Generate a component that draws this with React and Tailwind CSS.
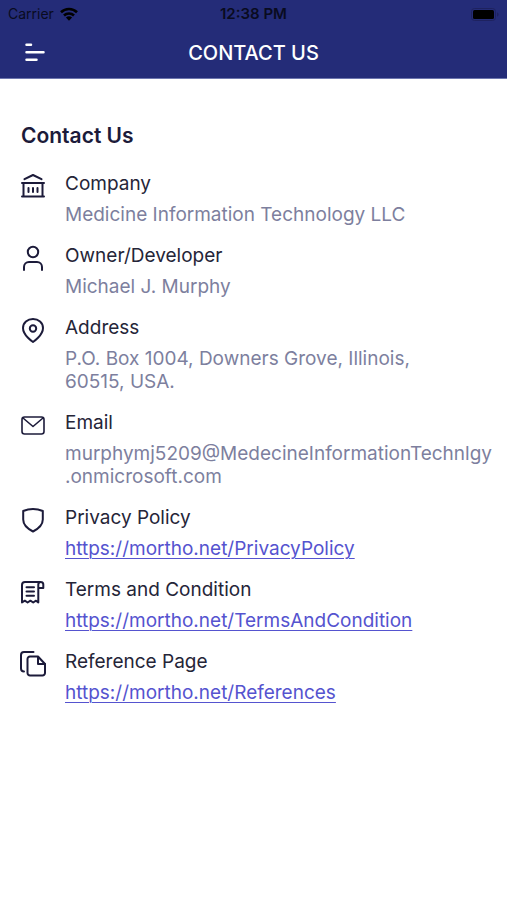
const iconProps = {
  viewBox: "0 0 24 24",
  fill: "none",
  stroke: "currentColor",
  strokeWidth: 2,
  strokeLinecap: "round",
  strokeLinejoin: "round",
  "aria-hidden": true,
  className: "w-6 h-6 shrink-0 mt-0.5 overflow-visible text-[#1c1b3a]",
};

function BankIcon() {
  return (
    <svg {...iconProps}>
      <path d="M3.500 5.200L12 1l8.500 4.200" />
      <path d="M1 9h22M2.500 9v13.500M21.500 9v13.500M1 22.500h22" />
      <path d="M7.500 14v4M12 14v4M16.500 14v4" />
    </svg>
  );
}

function UserIcon() {
  return (
    <svg {...iconProps}>
      <circle cx="12" cy="6" r="5.200" />
      <path d="M3 24v-3c0-2.800 2.200-5 5-5h8c2.800 0 5 2.200 5 5v3" />
    </svg>
  );
}

function PinIcon() {
  return (
    <svg {...iconProps}>
      <path d="M12 24S2 17.500 2 10C2 4.600 6.500 1 12 1s10 3.600 10 9c0 7.500-10 14-10 14z" />
      <circle cx="12" cy="10.500" r="3.200" />
    </svg>
  );
}

function MailIcon() {
  return (
    <svg {...iconProps} strokeWidth={1.6}>
      <rect x="1" y="4" width="22" height="17" rx="2.500" />
      <path d="M2 5l10 8.500L22 5" />
    </svg>
  );
}

function ShieldIcon() {
  return (
    <svg {...iconProps}>
      <path d="M12 1c3.500 0 6.800.7 9.800 2v8.500c0 6-4.300 9.200-9.800 12C6.500 20.700 2.200 17.500 2.200 11.500V3c3-1.300 6.300-2 9.800-2z" />
    </svg>
  );
}

function ReceiptIcon() {
  return (
    <svg {...iconProps}>
      <path d="M20 2H4a3 3 0 0 0-3 3v17.500l2.800-1.800 2.800 1.800 2.800-1.800 2.800 1.800 2.800-1.800 2.300 1.800V4.500a2.500 2.500 0 0 1 5 0V8h-4.500" />
      <path d="M5.500 7.200h7.500M5.500 11.500h7.500M5.500 15.800h7.500" />
    </svg>
  );
}

function PagesIcon() {
  return (
    <svg {...iconProps}>
      <path d="M12.500 0H3a3 3 0 0 0-3 3v13.500a3 3 0 0 0 3 3" />
      <path d="M17 4.500H9A2.500 2.500 0 0 0 6.500 7v14A2.500 2.500 0 0 0 9 23.500h12.500A2.500 2.500 0 0 0 24 21v-9l-7-7.500z" />
      <path d="M17 5v7h7" />
    </svg>
  );
}

const contacts = [
  { title: "Company", icon: BankIcon, lines: ["Medicine Information Technology LLC"] },
  { title: "Owner/Developer", icon: UserIcon, lines: ["Michael J. Murphy"] },
  {
    title: "Address",
    icon: PinIcon,
    lines: ["P.O. Box 1004, Downers Grove, Illinois,", "60515, USA."],
  },
  {
    title: "Email",
    icon: MailIcon,
    lines: ["murphymj5209@MedecineInformationTechnlgy", ".onmicrosoft.com"],
  },
  { title: "Privacy Policy", icon: ShieldIcon, url: "https://mortho.net/PrivacyPolicy" },
  { title: "Terms and Condition", icon: ReceiptIcon, url: "https://mortho.net/TermsAndCondition" },
  { title: "Reference Page", icon: PagesIcon, url: "https://mortho.net/References" },
];

function StatusBar() {
  return (
    <div className="grid grid-cols-3 items-center h-7 px-2 text-sm text-[#090b20]">
      <div className="flex items-center gap-1.5">
        <span>Carrier</span>
        <svg viewBox="0 0 18 14" className="w-[18px] h-3.5" aria-hidden="true">
          <g fill="none" stroke="#000" strokeWidth="2.600">
            <path d="M1 5.200a11.500 11.500 0 0 1 16 0" />
            <path d="M4 8.500a7.200 7.200 0 0 1 10 0" />
          </g>
          <path d="M9 13.800L5.900 10.600a4.500 4.500 0 0 1 6.200 0z" fill="#000" />
        </svg>
      </div>
      <span className="text-center text-[15px] font-semibold">12:38 PM</span>
      <svg viewBox="0 0 28 13" className="w-7 h-[13px] justify-self-end" aria-hidden="true">
        <rect x="0.500" y="0.500" width="24" height="12" rx="3" fill="none" stroke="#1e225f" />
        <rect x="2" y="2" width="21" height="9" rx="1.500" fill="#000" />
        <path d="M26 4.500v4c1-.3 1.600-1 1.600-2s-.6-1.700-1.600-2z" fill="#1e225f" />
      </svg>
    </div>
  );
}

function Header() {
  return (
    <header className="bg-[#242c78] border-b border-[#6d76ae]">
      <StatusBar />
      <div className="grid grid-cols-[40px_1fr_40px] items-center h-[50px] px-[15px]">
        <button type="button" aria-label="Open menu" className="flex items-center justify-center h-10">
          <svg viewBox="0 0 20 20" className="w-5 h-5" aria-hidden="true">
            <path
              d="M1.500 1.700h4.500M1.500 9.200h17M1.500 16.700h10"
              fill="none"
              stroke="#fff"
              strokeWidth="2.500"
              strokeLinecap="round"
            />
          </svg>
        </button>
        <h1 className="text-center text-xl font-medium text-white">CONTACT US</h1>
      </div>
    </header>
  );
}

function ContactItem({ item }) {
  const Icon = item.icon;

  return (
    <li className="flex gap-5">
      <Icon />
      <div className="flex flex-col gap-2 min-w-0 text-[19px] leading-[23px]">
        <h3 className="text-[#252538]">{item.title}</h3>
        {item.url ? (
          <a href={item.url} className="text-[#5553cf] underline underline-offset-3 decoration-1">
            {item.url}
          </a>
        ) : (
          <p className="text-[#7d7f9e]">
            {item.lines.map((line) => (
              <span key={line} className="block">
                {line}
              </span>
            ))}
          </p>
        )}
      </div>
    </li>
  );
}

export default function App() {
  return (
    <div className="min-h-screen bg-white font-['Inter',sans-serif]">
      <Header />
      <main className="px-[21px] pt-[43px] pb-10">
        <h2 className="text-[21px] leading-7 font-semibold text-[#1c1b3a]">Contact Us</h2>
        <ul className="flex flex-col gap-[18px] mt-[22px]">
          {contacts.map((item) => (
            <ContactItem key={item.title} item={item} />
          ))}
        </ul>
      </main>
    </div>
  );
}
